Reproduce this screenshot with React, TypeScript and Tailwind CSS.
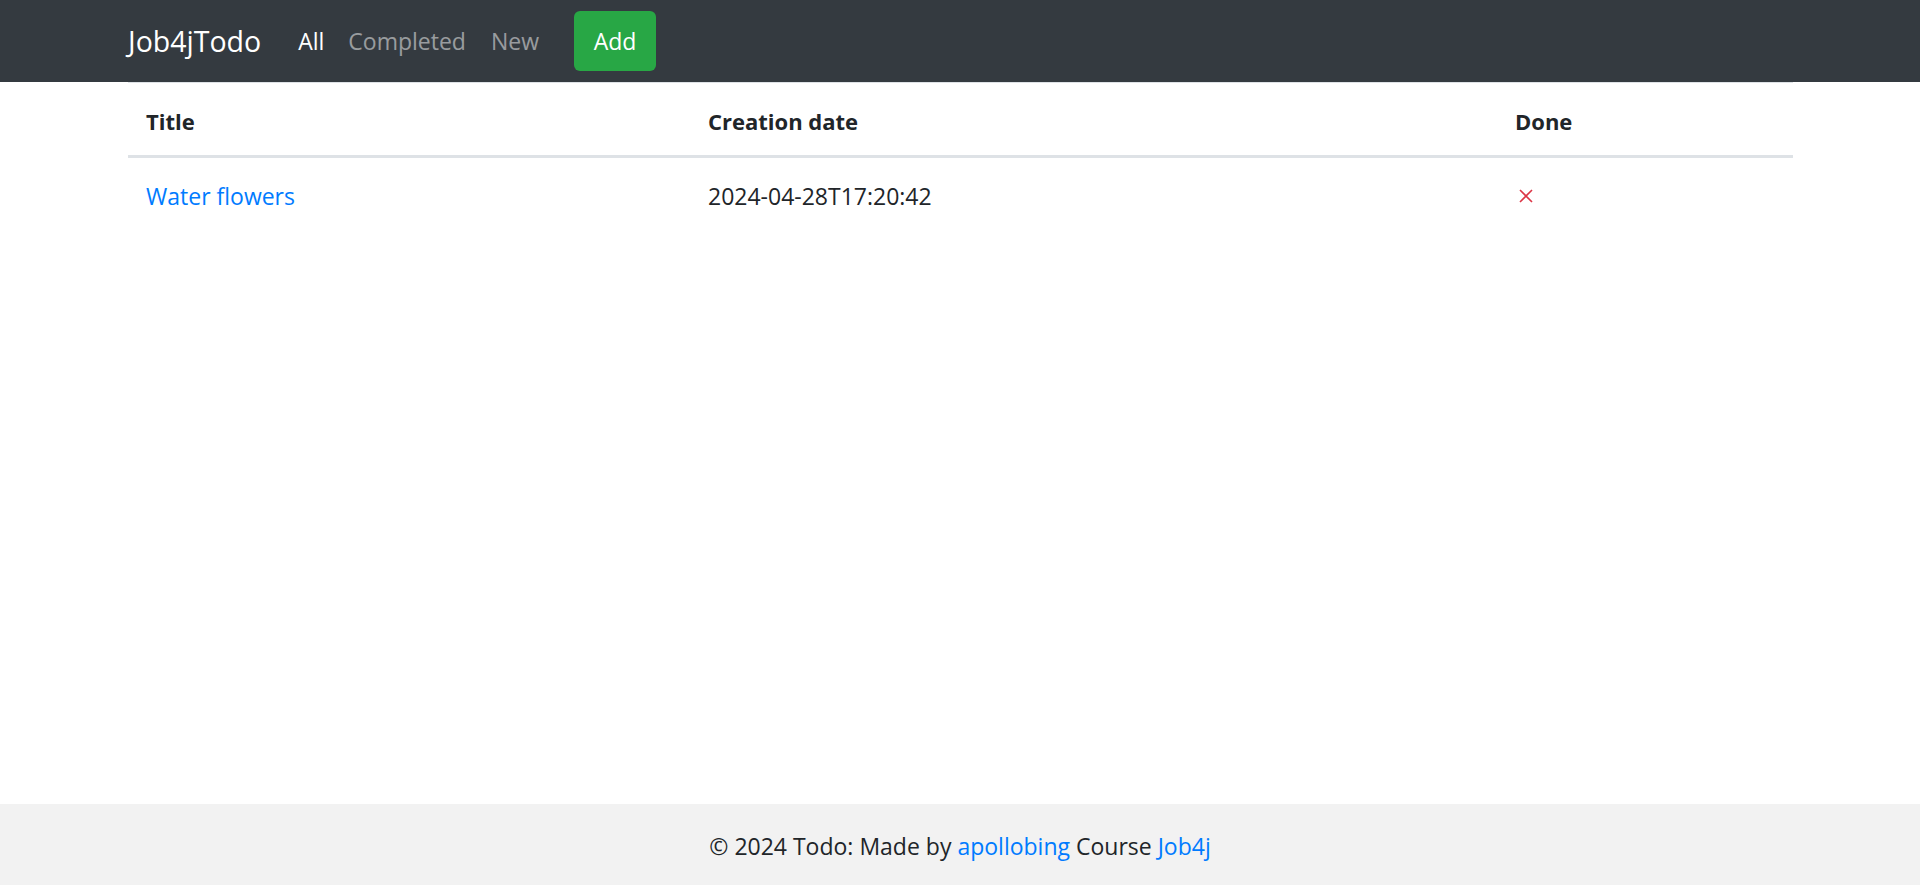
import React from "react";

export default function App() {
  const font = { fontFamily: '"Open Sans", "Noto Sans", Arial, sans-serif' };
  return (
    <div className="flex h-[885px] flex-col bg-white text-[#212529]" style={font}>
      <nav className="flex h-[82px] shrink-0 items-center bg-[#343a40]">
        <div className="ml-[128px] flex items-center">
          <span className="text-[28.5px] leading-none text-white">Job4jTodo</span>
          <div className="ml-[37px] flex items-center text-[23px] leading-none">
            <a className="text-white">All</a>
            <a className="ml-[24px] text-[rgba(255,255,255,0.5)]">Completed</a>
            <a className="ml-[25px] text-[rgba(255,255,255,0.5)]">New</a>
          </div>
          <button className="ml-[35px] flex h-[60px] w-[82px] items-center justify-center rounded-[6px] bg-[#28a745] text-[23px] text-white">
            Add
          </button>
        </div>
      </nav>
      <main className="flex-1">
        <div className="ml-[128px] w-[1665px]">
          <div className="grid h-[76px] grid-cols-[562px_807px_296px] items-center border-t border-[#dee2e6] border-b-[3px] pt-[4px] text-[22px] font-bold">
            <div className="pl-[18px]">Title</div>
            <div className="pl-[18px]">Creation date</div>
            <div className="pl-[18px]">Done</div>
          </div>
          <div className="grid h-[76px] grid-cols-[562px_807px_296px] items-center text-[23px]">
            <div className="pl-[18px] text-[#007bff]">Water flowers</div>
            <div className="pl-[18px]">2024-04-28T17:20:42</div>
            <div className="pl-[20px]">
              <svg width="14" height="14" viewBox="0 0 14 14" className="ml-[2px]">
                <path d="M1 1L13 13M13 1L1 13" stroke="#dc3545" strokeWidth="1.6" />
              </svg>
            </div>
          </div>
        </div>
      </main>
      <footer className="flex h-[81px] shrink-0 items-center justify-center bg-[#f2f2f2] pt-[4px] text-[23px]">
        <span>
          © 2024 Todo: Made by <a className="text-[#007bff]">apollobing</a> Course{" "}
          <a className="text-[#007bff]">Job4j</a>
        </span>
      </footer>
    </div>
  );
}
